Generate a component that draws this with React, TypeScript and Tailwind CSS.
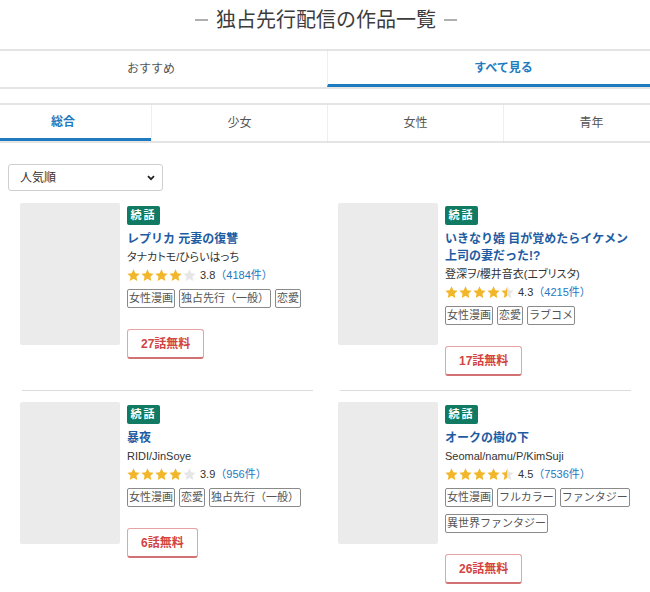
import React from "react";

type Item = {
  title: string;
  author: string;
  rating: number;
  count: string;
  tags: string[];
  free: string;
};

const items: Item[] = [
  {
    title: "レプリカ 元妻の復讐",
    author: "タナカトモ/ひらいはっち",
    rating: 3.8,
    count: "4184",
    tags: ["女性漫画", "独占先行（一般）", "恋愛"],
    free: "27話無料",
  },
  {
    title: "いきなり婚 目が覚めたらイケメン上司の妻だった!?",
    author: "登深ヲ/櫻井音衣(エブリスタ)",
    rating: 4.3,
    count: "4215",
    tags: ["女性漫画", "恋愛", "ラブコメ"],
    free: "17話無料",
  },
  {
    title: "暴夜",
    author: "RIDI/JinSoye",
    rating: 3.9,
    count: "956",
    tags: ["女性漫画", "恋愛", "独占先行（一般）"],
    free: "6話無料",
  },
  {
    title: "オークの樹の下",
    author: "Seomal/namu/P/KimSuji",
    rating: 4.5,
    count: "7536",
    tags: ["女性漫画", "フルカラー", "ファンタジー", "異世界ファンタジー"],
    free: "26話無料",
  },
];

const STAR = "M12 1.8l3.05 6.5 7.05.9-5.2 4.9 1.35 7L12 17.6l-6.25 3.5 1.35-7-5.2-4.9 7.05-.9z";

function Star({ kind, id }: { kind: "full" | "half" | "empty"; id: string }) {
  const gold = "#f2b62a";
  const grey = "#e6e6e6";
  return (
    <svg viewBox="1.2 1.2 21.6 21.6" className="w-[13px] h-[13px] block">
      {kind === "half" && (
        <defs>
          <linearGradient id={id} x1="0" x2="1" y1="0" y2="0">
            <stop offset="50%" stopColor={gold} />
            <stop offset="50%" stopColor={grey} />
          </linearGradient>
        </defs>
      )}
      <path d={STAR} fill={kind === "full" ? gold : kind === "empty" ? grey : `url(#${id})`} />
    </svg>
  );
}

function Stars({ rating, idx }: { rating: number; idx: number }) {
  const r = Math.round(rating * 2) / 2;
  const kinds: ("full" | "half" | "empty")[] = [];
  for (let i = 1; i <= 5; i++) {
    if (r >= i) kinds.push("full");
    else if (r >= i - 0.5) kinds.push("half");
    else kinds.push("empty");
  }
  return (
    <div className="flex items-center gap-[1px]">
      {kinds.map((k, i) => (
        <Star key={i} kind={k} id={`half-${idx}-${i}`} />
      ))}
    </div>
  );
}

function Card({ item, idx }: { item: Item; idx: number }) {
  return (
    <div className="flex flex-col">
      <div className="flex-1 flex pt-[11px] pb-[14px]">
        <div className="w-[100px] h-[142px] shrink-0 bg-[#ebebeb] rounded-[2px]" />
        <div className="ml-[7px] w-[186px] pt-[3px] flex flex-col items-start">
          <div className="h-[19px] w-[33px] bg-[#117a62] rounded-[2px] text-white text-[11px] font-bold leading-[19px] text-center tracking-[2px]">
            続話
          </div>
          <div className="mt-[6px] text-[12px] font-bold leading-[17px] text-[#1d5ca3]">
            {item.title}
          </div>
          <div className="text-[11px] leading-[18px] text-[#333] [font-feature-settings:'palt']">{item.author}</div>
          <div className="flex items-center h-[18px]">
            <Stars rating={item.rating} idx={idx} />
            <span className="ml-[4px] text-[11px] text-[#333]">{item.rating.toFixed(1)}</span>
            <span className="text-[11px] text-[#1f77c0]">（{item.count}件）</span>
          </div>
          <div className="mt-[5px] flex flex-wrap gap-x-[4px] gap-y-[7px]">
            {item.tags.map((t) => (
              <span
                key={t}
                className="border border-[#8a8a8a] rounded-[2px] px-[1px] text-[11px] leading-[17px] text-[#555]"
              >
                {t}
              </span>
            ))}
          </div>
          <div className="mt-[21px] h-[30px] px-[13px] flex items-center border border-[#e6a3a3] border-b-2 border-b-[#d27272] rounded-[3px] text-[12px] font-bold text-[#d24444]">
            {item.free}
          </div>
        </div>
      </div>
      <div className="ml-[2px] w-[291px] h-px bg-[#dcdcdc]" />
    </div>
  );
}

export default function App() {
  return (
    <div className="w-[650px] min-h-[592px] overflow-hidden bg-white font-['Liberation_Sans','Noto_Sans_CJK_JP',sans-serif] text-[#333]">
      <div className="h-[49px] flex justify-center items-start pt-[6px]">
        <div className="flex items-center h-[28px] ml-[2px]">
          <span className="w-[13px] h-[2px] bg-[#b0b0b0]" />
          <span className="mx-[8px] text-[20px] leading-[28px] text-[#3c3c3c]">独占先行配信の作品一覧</span>
          <span className="w-[13px] h-[2px] bg-[#b0b0b0]" />
        </div>
      </div>

      <div className="ml-[-25px] w-[704px] grid grid-cols-2 border-y-2 border-[#e4e4e4]">
        <div className="h-[36px] flex items-center justify-center text-[12px] text-[#555]">おすすめ</div>
        <div className="h-[36px] flex items-center justify-center text-[12px] font-bold text-[#1f7bbf] border-l border-[#eeeeee] border-b-[3px] border-b-[#1f7bbf]">
          すべて見る
        </div>
      </div>

      <div className="mt-[14px] ml-[-25px] w-[704px] grid grid-cols-4 border-y-2 border-[#e4e4e4]">
        <div className="h-[36px] flex items-center justify-center text-[12px] font-bold text-[#1f7bbf] border-b-[3px] border-b-[#1f7bbf]">
          総合
        </div>
        <div className="h-[36px] flex items-center justify-center text-[12px] text-[#555] border-l border-[#eeeeee]">少女</div>
        <div className="h-[36px] flex items-center justify-center text-[12px] text-[#555] border-l border-[#eeeeee]">女性</div>
        <div className="h-[36px] flex items-center justify-center text-[12px] text-[#555] border-l border-[#eeeeee]">青年</div>
      </div>

      <div className="mt-[21px] ml-[8px] w-[155px] h-[27px] mb-[1px] border border-[#cfcfcf] rounded-[3px] flex items-center justify-between pl-[11px] pr-[7px]">
        <span className="text-[12px] text-[#333]">人気順</span>
        <svg viewBox="0 0 8 6" className="w-[8px] h-[6px]">
          <path d="M1 1.2l3 3 3-3" fill="none" stroke="#222" strokeWidth="1.8" />
        </svg>
      </div>

      <div className="pl-[20px] grid grid-cols-[318px_293px]">
        {items.map((it, i) => (
          <Card key={i} item={it} idx={i} />
        ))}
      </div>
    </div>
  );
}
